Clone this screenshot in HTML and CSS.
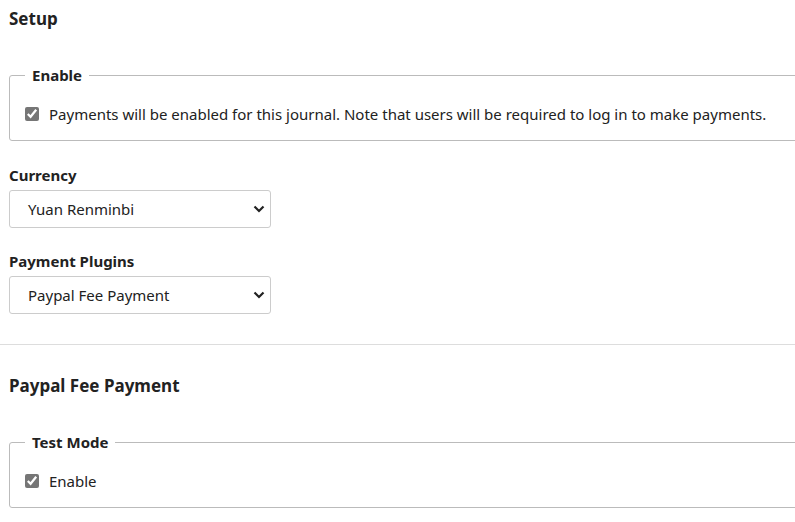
FILE: index.html
```html
<!DOCTYPE html>
<html>
<head>
<meta charset="utf-8">
<link rel="stylesheet" href="styles.css">
</head>
<body>
<div class="page">
  <section class="section">
    <h2 class="heading">Setup</h2>
    <fieldset class="group">
      <legend class="legend">Enable</legend>
      <label class="check"><input type="checkbox" checked class="box"><span>Payments will be enabled for this journal. Note that users will be required to log in to make payments.</span></label>
    </fieldset>
    <div class="field">
      <label class="label">Currency</label>
      <div class="select"><span>Yuan Renminbi</span><svg class="chev" width="12" height="8" viewBox="0 0 12 8"><path d="M1.5 1.5 L6 6 L10.5 1.5" fill="none" stroke="#222" stroke-width="2.2"/></svg></div>
    </div>
    <div class="field">
      <label class="label">Payment Plugins</label>
      <div class="select"><span>Paypal Fee Payment</span><svg class="chev" width="12" height="8" viewBox="0 0 12 8"><path d="M1.5 1.5 L6 6 L10.5 1.5" fill="none" stroke="#222" stroke-width="2.2"/></svg></div>
    </div>
  </section>
  <section class="section second">
    <h2 class="heading">Paypal Fee Payment</h2>
    <fieldset class="group">
      <legend class="legend">Test Mode</legend>
      <label class="check"><input type="checkbox" checked class="box"><span>Enable</span></label>
    </fieldset>
  </section>
</div>
</body>
</html>
```
FILE: styles.css
```css
html, body { margin: 0; padding: 0; background: #fff; overflow: hidden; }
body { font-family: "Noto Sans", sans-serif; color: #222; font-size: 15px; }
.page { width: 830px; padding: 0 0 0 9px; box-sizing: border-box; }
.section { padding-top: 7px; }
.heading { margin: 0; font-size: 17px; font-weight: 700; line-height: 24px; }
.group { margin: 33px 0 0 0; padding: 17px 15px 15px 15px; border: 1px solid #bbb; border-radius: 3px; }
.legend { padding: 0 7px; font-weight: 700; font-size: 15px; line-height: 22px; }
.check { display: flex; align-items: center; line-height: 22px; }
.box { width: 14px; height: 14px; margin: 0 10px 0 0; accent-color: #767676; }
.field { margin-top: 23px; }
.field + .field { margin-top: 22px; }
.label { display: block; font-weight: 700; line-height: 22px; margin-bottom: 4px; }
.select { width: 262px; height: 38px; box-sizing: border-box; border: 1px solid #ccc; border-radius: 3px; display: flex; align-items: center; justify-content: space-between; padding: 0 5px 0 18px; }
.second { border-top: 1px solid #ddd; margin-top: 30px; margin-left: -9px; padding-left: 9px; padding-top: 29px; }
```
